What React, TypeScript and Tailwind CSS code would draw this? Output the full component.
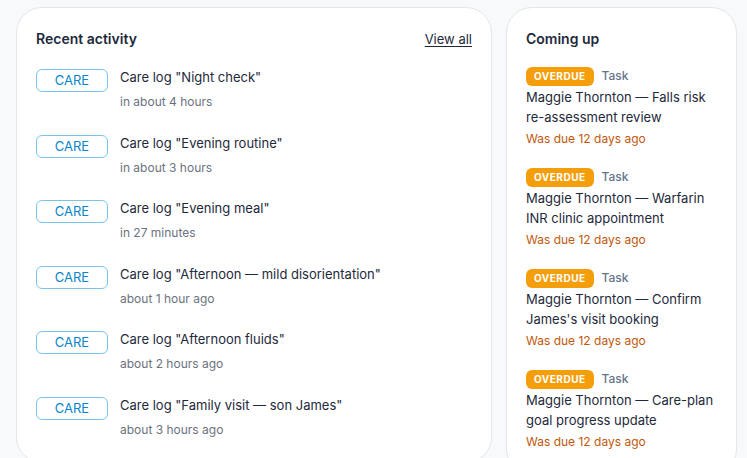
import React from "react";

const activities = [
  { title: 'Care log "Night check"', time: "in about 4 hours" },
  { title: 'Care log "Evening routine"', time: "in about 3 hours" },
  { title: 'Care log "Evening meal"', time: "in 27 minutes" },
  { title: 'Care log "Afternoon — mild disorientation"', time: "about 1 hour ago" },
  { title: 'Care log "Afternoon fluids"', time: "about 2 hours ago" },
  { title: 'Care log "Family visit — son James"', time: "about 3 hours ago" },
];

const upcoming = [
  "Maggie Thornton — Falls risk re-assessment review",
  "Maggie Thornton — Warfarin INR clinic appointment",
  "Maggie Thornton — Confirm James's visit booking",
  "Maggie Thornton — Care-plan goal progress update",
];

export default function App() {
  return (
    <div
      className="min-h-screen bg-[#f8f9fb] pl-4 pt-[7px] flex gap-[14px] items-start overflow-hidden"
      style={{ fontFamily: "Inter, 'Noto Sans', sans-serif" }}
    >
      <div className="w-[476px] shrink-0 bg-white border border-[#e3e6eb] rounded-[26px] px-[19px] pt-[21px] pb-6">
        <div className="flex items-center justify-between h-5">
          <h2 className="text-[14px] leading-5 font-semibold text-[#1e293b]">Recent activity</h2>
          <a className="text-[13px] leading-5 text-[#1e293b] underline underline-offset-2">View all</a>
        </div>
        <div className="mt-[18px] flex flex-col gap-[22.5px]">
          {activities.map((a, i) => (
            <div key={i} className="flex items-start">
              <div className="mt-[2px] w-[72px] h-[23px] shrink-0 rounded-[6px] border border-[#7cc3ec] text-[#0a85c9] text-[13px] leading-[21px] text-center">
                CARE
              </div>
              <div className="ml-3">
                <div className="text-[13px] leading-5 text-[#1e293b]">{a.title}</div>
                <div className="mt-[7px] text-[12px] leading-4 text-[#6b7280]">{a.time}</div>
              </div>
            </div>
          ))}
        </div>
      </div>
      <div className="w-[231px] shrink-0 bg-white border border-[#e3e6eb] rounded-[26px] px-[19px] pt-[21px] pb-6">
        <h2 className="text-[14px] leading-5 font-semibold text-[#1e293b]">Coming up</h2>
        <div className="mt-[17px] flex flex-col gap-5">
          {upcoming.map((t, i) => (
            <div key={i}>
              <div className="flex items-center h-5">
                <span className="h-[19px] px-2 rounded-[6px] bg-[#f59e0b] text-white text-[10px] font-bold tracking-[0.05em] leading-[19px]">
                  OVERDUE
                </span>
                <span className="ml-2 text-[12px] font-medium text-[#64748b]">Task</span>
              </div>
              <div className="mt-px text-[13px] leading-5 text-[#1e293b]">{t}</div>
              <div className="mt-1 text-[12px] leading-4 text-[#c2570c]">Was due 12 days ago</div>
            </div>
          ))}
        </div>
      </div>
    </div>
  );
}
